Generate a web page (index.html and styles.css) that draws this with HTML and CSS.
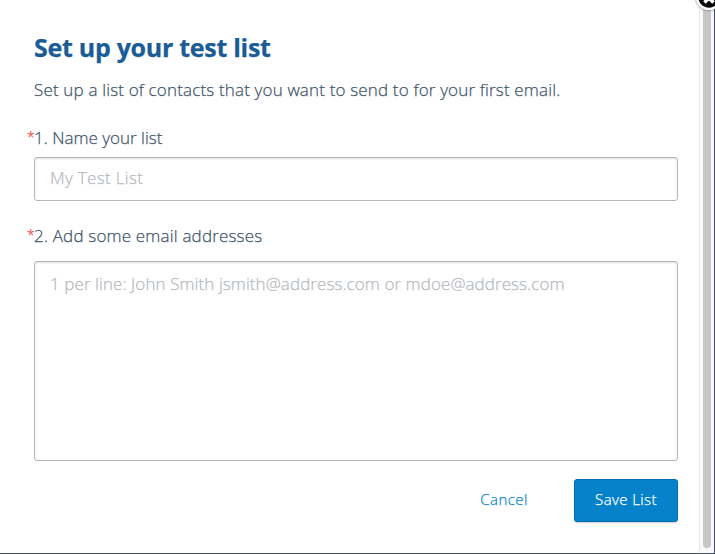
FILE: index.html
```html
<!DOCTYPE html>
<html lang="en">
<head>
<meta charset="utf-8">
<title>Set up your test list</title>
<link rel="stylesheet" href="styles.css">
</head>
<body>
<div class="dialog">
  <main class="content">
    <h1 class="title">Set up your test list</h1>
    <p class="intro">Set up a list of contacts that you want to send to for your first email.</p>
    <label class="label label-name" for="name"><span class="required">*</span><span>1. Name your list</span></label>
    <input class="field name" id="name" placeholder="My Test List">
    <label class="label label-emails" for="emails"><span class="required">*</span><span>2. Add some email addresses</span></label>
    <textarea class="field emails" id="emails" placeholder="1 per line: John Smith jsmith@address.com or mdoe@address.com"></textarea>
    <div class="actions">
      <a class="cancel">Cancel</a>
      <button class="save">Save List</button>
    </div>
  </main>
  <div class="scrollbar"><div class="thumb"></div></div>
</div>
<svg class="close" width="30" height="30" viewBox="0 0 30 30">
  <circle cx="15" cy="15" r="12" fill="#050505" stroke="#fff" stroke-width="2.5"/>
  <path d="M10.5 11.5l9 9M19.5 11.5l-9 9" stroke="#fff" stroke-width="3.6"/>
</svg>
</body>
</html>
```
FILE: styles.css
```css
* { box-sizing: border-box; }
body {
  margin: 0;
  height: 554px;
  overflow: hidden;
  position: relative;
  background: #fff;
  font-family: "Open Sans", "Noto Sans", sans-serif;
  font-weight: 300;
  color: #42566a;
  -webkit-text-stroke-width: 0.25px;
}
.dialog {
  display: flex;
  height: 554px;
  border-right: 1px solid #3f4a66;
  border-bottom: 1px solid #4c525d;
}
.content {
  flex: 1;
  display: flex;
  flex-direction: column;
  padding: 31px 21px 0 34px;
}
.title {
  margin: 0;
  height: 32px;
  font-size: 25px;
  line-height: 32px;
  font-weight: 700;
  color: #1b5c96;
  letter-spacing: -0.28px;
  white-space: nowrap;
}
.intro {
  margin: 15px 0 0;
  height: 24px;
  font-size: 17px;
  line-height: 24px;
  letter-spacing: 0.16px;
  white-space: nowrap;
}
.label {
  display: flex;
  height: 24px;
  margin-left: -7px;
  font-size: 17px;
  line-height: 24px;
}
.label-name { margin-top: 24px; }
.label-emails { margin-top: 23px; letter-spacing: 0.18px; }
.required {
  width: 7px;
  font-size: 14px;
  line-height: 22px;
  color: #f0504a;
}
.field {
  width: 644px;
  border: 1px solid #b4b9c0;
  border-radius: 3px;
  box-shadow: inset 0 1px 2px #0002;
  background: #fff;
  font: inherit;
  font-size: 17px;
  resize: none;
  overflow: hidden;
}
.field::placeholder { color: #b5bac0; opacity: 1; }
.name { height: 44px; margin-top: 7px; padding: 0 15px 3px; letter-spacing: 0.32px; }
.emails {
  height: 200px;
  margin-top: 13px;
  padding: 10px 15px;
  line-height: 24px;
  letter-spacing: 0.08px;
  white-space: nowrap;
}
.actions {
  display: flex;
  justify-content: flex-end;
  align-items: center;
  margin-top: 18px;
  gap: 46px;
  font-size: 15px;
}
.cancel { color: #0c87c8; line-height: 24px; padding-bottom: 3px; letter-spacing: 0.5px; }
.save {
  width: 104px;
  height: 43px;
  padding: 0 0 3px;
  border: 1px solid #066cb2;
  border-radius: 3px;
  background: #0582ca;
  box-shadow: 0 1px 2px #0003;
  color: #fff;
  font: inherit;
  letter-spacing: 0.4px;
}
.scrollbar {
  width: 15px;
  border-left: 1px solid #e8e8e8;
  background: #fafafa;
  padding-left: 3px;
}
.thumb {
  width: 8px;
  height: 548px;
  border-radius: 0 0 4px 4px;
  background: #c6c6c6;
}
.close {
  position: absolute;
  left: 694px;
  top: -18px;
  filter: drop-shadow(0 0 1px #0009);
}
```
